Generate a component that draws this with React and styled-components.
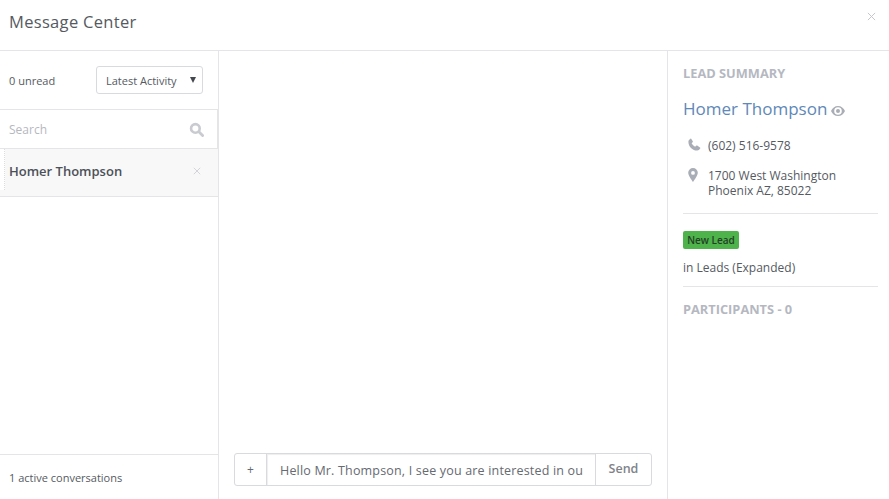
import React from "react";
import styled, { createGlobalStyle } from "styled-components";

const Global = createGlobalStyle`
  html, body { margin: 0; padding: 0; background: #fff; }
  body { font-family: "Open Sans", "Liberation Sans", sans-serif; color: #555a62; overflow: hidden; }
  * { box-sizing: border-box; }
`;

const Modal = styled.div`
  width: 889px;
  height: 499px;
  display: flex;
  flex-direction: column;
`;
const Header = styled.header`
  height: 51px;
  flex: none;
  border-bottom: 1px solid #e5e5e8;
  display: flex;
  justify-content: space-between;
  padding: 0 13px 0 9px;
`;
const Title = styled.h1`
  margin: 11px 0 0;
  font-size: 16.5px;
  line-height: 22px;
  font-weight: 400;
  color: #555a62;
  letter-spacing: 0.32px;
`;
const CloseIcon = styled.svg`
  display: block;
  width: ${(p) => p.$size}px;
  height: ${(p) => p.$size}px;
  flex: none;
  stroke: ${(p) => p.$color};
  stroke-width: 1.1;
  fill: none;
`;
const TopClose = styled.div`
  margin-top: 12px;
`;
const Body = styled.div`
  flex: 1;
  display: flex;
  min-height: 0;
`;
const Left = styled.aside`
  width: 219px;
  flex: none;
  border-right: 1px solid #e5e5e8;
  display: flex;
  flex-direction: column;
`;
const Filter = styled.div`
  height: 58px;
  flex: none;
  display: flex;
  align-items: center;
  justify-content: space-between;
  padding: 0 15px 0 9px;
  font-size: 11px;
  color: #555a62;
`;
const UnreadCount = styled.span`
  padding-top: 1px;
`;
const Select = styled.div`
  width: 107px;
  height: 28px;
  border: 1px solid #d9dade;
  border-radius: 3px;
  display: flex;
  align-items: center;
  justify-content: space-between;
  padding: 1px 6px 0 9px;
  font-size: 11px;
  color: #555a62;
`;
const Arrow = styled.span`
  width: 0;
  height: 0;
  margin-bottom: 2px;
  border-left: 3px solid transparent;
  border-right: 3px solid transparent;
  border-top: 6px solid #44484e;
`;
const SearchRow = styled.div`
  height: 40px;
  flex: none;
  border-top: 1px solid #e5e5e8;
  border-bottom: 1px solid #e5e5e8;
  border-right: 1px solid #e5e5e8;
  display: flex;
  align-items: center;
  justify-content: space-between;
  padding: 0 13px 0 9px;
  font-size: 12px;
  color: #b5b8bf;
`;
const Conversation = styled.div`
  position: relative;
  height: 48px;
  flex: none;
  background: #f8f8f9;
  border-bottom: 1px solid #e5e5e8;
  display: flex;
  align-items: center;
  justify-content: space-between;
  padding: 0 17px 3px 9px;
  font-size: 13px;
  font-weight: 600;
  color: #4c5158;
`;
const Marker = styled.span`
  position: absolute;
  left: 0;
  top: 0;
  width: 5px;
  height: 41px;
  background: #fff;
  border-right: 1px dotted #dcdde0;
`;
const ConversationName = styled.span`
  position: relative;
`;
const Spacer = styled.div`
  flex: 1;
`;
const LeftFooter = styled.div`
  height: 45px;
  flex: none;
  border-top: 1px solid #e5e5e8;
  display: flex;
  align-items: center;
  padding: 0 9px;
  font-size: 11px;
  color: #555a62;
`;
const Center = styled.main`
  flex: 1;
  display: flex;
  flex-direction: column;
  justify-content: flex-end;
  padding: 0 15px 13px;
  border-right: 1px solid #e5e5e8;
`;
const Composer = styled.div`
  height: 33px;
  display: flex;
  border: 1px solid #d9dade;
  border-radius: 3px;
`;
const Plus = styled.div`
  width: 32px;
  flex: none;
  display: flex;
  align-items: center;
  justify-content: center;
  font-size: 12px;
  color: #666a71;
  border-right: 1px solid #d9dade;
`;
const MessageInput = styled.input`
  flex: 1;
  min-width: 0;
  border: 0;
  outline: 0;
  padding: 1px 12px 0 13px;
  font: 400 12.5px "Open Sans", "Liberation Sans", sans-serif;
  letter-spacing: 0.18px;
  color: #666a71;
  background: #fff;
  box-shadow: inset 1px 1px 1px rgba(0, 0, 0, 0.07);
`;
const Send = styled.div`
  width: 56px;
  flex: none;
  display: flex;
  align-items: center;
  justify-content: center;
  border-left: 1px solid #d9dade;
  font-size: 12.5px;
  font-weight: 600;
  color: #7f8389;
  padding-bottom: 2px;
`;
const Right = styled.aside`
  width: 221px;
  flex: none;
  padding: 14px 11px 0 15px;
  display: flex;
  flex-direction: column;
`;
const SectionTitle = styled.h2`
  margin: 0;
  font-size: 12.8px;
  line-height: 16px;
  font-weight: 700;
  color: #b5b8c1;
`;
const NameRow = styled.div`
  margin-top: 17px;
  display: flex;
  align-items: center;
  gap: 4px;
`;
const Name = styled.span`
  font-size: 17px;
  line-height: 22px;
  color: #6088b8;
`;
const Glyph = styled.svg`
  flex: none;
  fill: #a9adb5;
`;
const EyeGlyph = styled(Glyph)`
  margin-top: 4px;
`;
const SearchGlyph = styled.svg`
  flex: none;
  fill: none;
`;
const InfoRow = styled.div`
  margin-top: ${(p) => p.$top}px;
  display: flex;
  align-items: flex-start;
  gap: ${(p) => p.$gap}px;
  padding-left: ${(p) => p.$left}px;
  font-size: 12px;
  line-height: 15px;
  color: #555a62;
`;
const Divider = styled.hr`
  width: 100%;
  margin: ${(p) => p.$m};
  border: 0;
  border-top: 1px solid #e5e5e8;
`;
const Badge = styled.span`
  align-self: flex-start;
  height: 18px;
  width: 56px;
  display: flex;
  align-items: center;
  justify-content: center;
  background: #4db34a;
  border-radius: 2px;
  font-size: 10px;
  font-weight: 600;
  color: #233f26;
`;
const Stage = styled.div`
  margin-top: 11px;
  font-size: 12px;
  line-height: 16px;
  color: #555a62;
`;

const X = ({ size, color }) => (
  <CloseIcon $size={size} $color={color} viewBox="0 0 10 10">
    <path d="M1 1 9 9M9 1 1 9" />
  </CloseIcon>
);

export default function App() {
  return (
    <Modal>
      <Global />
      <Header>
        <Title>Message Center</Title>
        <TopClose>
          <X size={9} color="#c4c6cb" />
        </TopClose>
      </Header>
      <Body>
        <Left>
          <Filter>
            <UnreadCount>0 unread</UnreadCount>
            <Select>
              <span>Latest Activity</span>
              <Arrow />
            </Select>
          </Filter>
          <SearchRow>
            <span>Search</span>
            <SearchGlyph width="15" height="15" viewBox="0 0 16 16">
              <circle cx="6.8" cy="6.8" r="4.6" stroke="#c9cbd0" strokeWidth="2.8" />
              <path d="M10.5 10.5 14.5 14.5" stroke="#c9cbd0" strokeWidth="3" strokeLinecap="round" />
            </SearchGlyph>
          </SearchRow>
          <Conversation>
            <Marker />
            <ConversationName>Homer Thompson</ConversationName>
            <X size={8} color="#cdcfd3" />
          </Conversation>
          <Spacer />
          <LeftFooter>1 active conversations</LeftFooter>
        </Left>
        <Center>
          <Composer>
            <Plus>+</Plus>
            <MessageInput readOnly value="Hello Mr. Thompson, I see you are interested in our property" />
            <Send>Send</Send>
          </Composer>
        </Center>
        <Right>
          <SectionTitle>LEAD SUMMARY</SectionTitle>
          <NameRow>
            <Name>Homer Thompson</Name>
            <EyeGlyph width="14" height="10" viewBox="0 0 14 10">
              <path fillRule="evenodd" d="M7 0C3.8 0 1.3 2 0 5c1.3 3 3.8 5 7 5s5.7-2 7-5c-1.300-3-3.800-5-7-5Zm0 1.200a3.800 3.800 0 1 1 0 7.600 3.800 3.800 0 0 1 0-7.600ZM7 3a2 2 0 1 0 0 4 2 2 0 0 0 0-4Z" />
            </EyeGlyph>
          </NameRow>
          <InfoRow $top={18} $gap={7} $left={5}>
            <Glyph width="13" height="13" viewBox="0 0 13 13">
              <path d="M3 .4 4.800 3.200c.2.400.1.800-.2 1.100l-1 1c.8 1.500 2 2.700 3.500 3.500l1-1c.3-.3.7-.4 1.100-.2l2.800 1.800c.4.300.5.800.2 1.200-.8 1.200-1.800 2-3 2C4.500 12.600.4 8.500.4 3.700c0-1.200.8-2.200 2-3 .2-.2.400-.3.600-.3Z" />
            </Glyph>
            <span>(602) 516-9578</span>
          </InfoRow>
          <InfoRow $top={15} $gap={10} $left={5}>
            <Glyph width="10" height="14" viewBox="0 0 10 14">
              <path fillRule="evenodd" d="M5 0a4.800 4.800 0 0 0-4.800 4.800C.2 7.800 5 14 5 14s4.800-6.200 4.800-9.200A4.800 4.800 0 0 0 5 0Zm0 3a1.900 1.900 0 1 1 0 3.800A1.900 1.900 0 0 1 5 3Z" />
            </Glyph>
            <span>
              1700 West Washington
              <br />
              Phoenix AZ, 85022
            </span>
          </InfoRow>
          <Divider $m="15px 0 17px" />
          <Badge>New Lead</Badge>
          <Stage>in Leads (Expanded)</Stage>
          <Divider $m="10px 0 14px" />
          <SectionTitle>PARTICIPANTS - 0</SectionTitle>
        </Right>
      </Body>
    </Modal>
  );
}
